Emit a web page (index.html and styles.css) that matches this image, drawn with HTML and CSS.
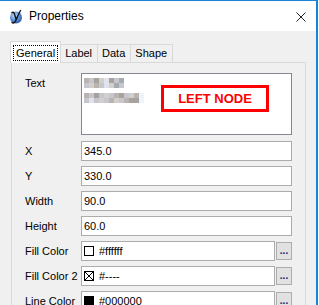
FILE: index.html
```html
<html>
<head>
	<meta charset="utf-8">
	<title>Properties</title>
	<link rel="stylesheet" href="styles.css">
</head>
<body>
	<div class="window">
		<div class="titlebar">
			<svg class="appicon" width="14" height="15" viewBox="0 0 14 15">
				<defs>
					<radialGradient id="ball" cx="0.4" cy="0.35" r="0.7">
						<stop offset="0" stop-color="#cfe3fb"/>
						<stop offset="0.5" stop-color="#5f97de"/>
						<stop offset="1" stop-color="#234f9c"/>
					</radialGradient>
				</defs>
				<circle cx="7" cy="8.5" r="6" fill="url(#ball)"/>
				<path d="M3 3.5 C4.5 2.5 5.5 4 6 7 L7 10 M11.5 1.5 C10 4 8 9 6.5 12 C5.5 14 4 14.5 3 13.5" fill="none" stroke="#111" stroke-width="1.4" stroke-linecap="round"/>
			</svg>
			<span class="title">Properties</span>
			<svg class="close" width="10" height="10" viewBox="0 0 10 10">
				<path d="M0.5 0.5 L9.5 9.5 M9.5 0.5 L0.5 9.5" stroke="#222" stroke-width="1"/>
			</svg>
		</div>
		<div class="content">
			<div class="tabs">
				<div class="tab selected"><span class="focus">General</span></div>
				<div class="tab">Label</div>
				<div class="tab">Data</div>
				<div class="tab">Shape</div>
			</div>
			<div class="panel">
				<div class="form">
					<div class="label top">Text</div>
					<div class="textbox">
						<div class="mosaic">
							<div class="line">
								<div class="row"><i class="c1"></i><i class="c2"></i><i class="c3"></i><i class="c4"></i><i class="c5"></i><i class="c3"></i><i class="c2"></i><i class="c6"></i></div>
								<div class="row"><i class="c2"></i><i class="c4"></i><i class="c1"></i><i class="c2"></i><i class="c5"></i><i class="c4"></i><i class="c6"></i><i class="c2"></i></div>
							</div>
							<div class="line">
								<div class="row"><i class="c1"></i><i class="c2"></i><i class="c3"></i><i class="c2"></i><i class="c4"></i><i class="c2"></i><i class="c1"></i><i class="c3"></i><i class="c2"></i><i class="c4"></i><i class="c1"></i><i class="c7"></i></div>
								<div class="row"><i class="c2"></i><i class="c5"></i><i class="c2"></i><i class="c4"></i><i class="c2"></i><i class="c1"></i><i class="c4"></i><i class="c2"></i><i class="c1"></i><i class="c3"></i><i class="c3"></i><i class="c7"></i></div>
							</div>
						</div>
						<div class="nodelabel">LEFT NODE</div>
					</div>

					<div class="label">X</div>
					<div class="field">345.0</div>
					<div class="label">Y</div>
					<div class="field">330.0</div>
					<div class="label">Width</div>
					<div class="field">90.0</div>
					<div class="label">Height</div>
					<div class="field">60.0</div>

					<div class="label">Fill Color</div>
					<div class="colorrow">
						<div class="field color"><span class="swatch white"></span>#ffffff</div>
						<div class="dots">...</div>
					</div>
					<div class="label">Fill Color 2</div>
					<div class="colorrow">
						<div class="field color">
							<svg class="swatch none" width="10" height="10" viewBox="0 0 10 10">
								<rect x="0.5" y="0.5" width="9" height="9" fill="#fff" stroke="#000"/>
								<path d="M0.5 0.5 L9.5 9.5 M9.5 0.5 L0.5 9.5" stroke="#000"/>
							</svg>#----
						</div>
						<div class="dots">...</div>
					</div>
					<div class="label">Line Color</div>
					<div class="colorrow">
						<div class="field color"><span class="swatch black"></span>#000000</div>
						<div class="dots">...</div>
					</div>
				</div>
			</div>
		</div>
	</div>
</body>
</html>
```
FILE: styles.css
```css
*{
	box-sizing: border-box;
}
body{
	margin: 0;
	background: #fff;
	font-family: "Liberation Sans", Arial, sans-serif;
	font-size: 11px;
	color: #000;
	overflow: hidden;
}
.window{
	width: 318px;
	height: 305px;
	border-top: 1px solid #1883d7;
	border-right: 2px solid #1883d7;
	background: #f0f0f0;
	overflow: hidden;
}
.titlebar{
	height: 30px;
	background: #fff;
	display: flex;
	align-items: center;
	padding-left: 9px;
	padding-right: 10px;
}
.appicon{
	margin-top: 1px;
}
.title{
	font-size: 12px;
	margin-left: 6px;
	flex: 1;
}
.close{
	margin-top: 1px;
}

.content{
	padding: 10px 0 0 10px;
}
.tabs{
	display: flex;
	align-items: flex-end;
	height: 21px;
	position: relative;
	z-index: 1;
}
.tab{
	height: 18px;
	line-height: 17px;
	border: 1px solid #d9d9d9;
	border-bottom: none;
	border-left: none;
	background: #f0f0f0;
	padding: 0 5px 0 4px;
}
.tab.selected{
	border-left: 1px solid #d9d9d9;
	background: #fff;
	padding: 0 2px;
	margin-bottom: -1px;
	height: 22px;
}
.focus{
	display: inline-block;
	margin-top: 3px;
	height: 16px;
	line-height: 14px;
	padding: 0 2px;
	border: 1px dotted #000;
}
.panel{
	margin-left: 1px;
	width: 295px;
	height: 250px;
	border: 1px solid #d9d9d9;
	background: #f0f0f0;
	padding: 10px 13px 0 13px;
}

.form{
	display: grid;
	grid-template-columns: 56px 1fr;
	row-gap: 5px;
	align-items: center;
}
.label{
	white-space: nowrap;
}
.label.top{
	align-self: start;
	padding-top: 4px;
}

.textbox{
	height: 62px;
	border: 1px solid #828790;
	background: #fff;
	margin-bottom: 1px;
	display: flex;
	align-items: flex-start;
	padding: 4px 0 0 2px;
}
.mosaic{
	width: 60px;
}
.line{
	margin-bottom: 5px;
}
.row{
	display: flex;
	height: 5px;
}
.row i{
	width: 5px;
	height: 5px;
}
.c1{ background: #bab3b0; }
.c2{ background: #c6c6cc; }
.c3{ background: #a6a29e; }
.c4{ background: #d2d0cc; }
.c5{ background: #e0e2ee; }
.c6{ background: #a3aab0; }
.c7{ background: #eef4fc; }

.nodelabel{
	margin: 7px 0 0 17px;
	width: 108px;
	height: 27px;
	border: 3px solid #ff0000;
	color: #ff0000;
	font-weight: bold;
	font-size: 13px;
	line-height: 21px;
	text-align: center;
}

.field{
	height: 20px;
	line-height: 18px;
	border: 1px solid #acacac;
	background: #fff;
	padding-left: 2px;
	white-space: nowrap;
}
.colorrow{
	display: flex;
	align-items: center;
	gap: 1px;
}
.colorrow .field{
	flex: 1;
}
.field.color{
	display: flex;
	align-items: center;
}
.swatch{
	display: inline-block;
	width: 10px;
	height: 10px;
	margin-right: 5px;
}
.swatch.white{
	border: 1px solid #000;
	background: #fff;
}
.swatch.black{
	background: #000;
}
.dots{
	width: 16px;
	height: 18px;
	border: 1px solid #adadad;
	background: #e1e1e1;
	color: #1c1c6e;
	font-weight: bold;
	font-size: 10px;
	line-height: 16px;
	text-align: center;
}
```
